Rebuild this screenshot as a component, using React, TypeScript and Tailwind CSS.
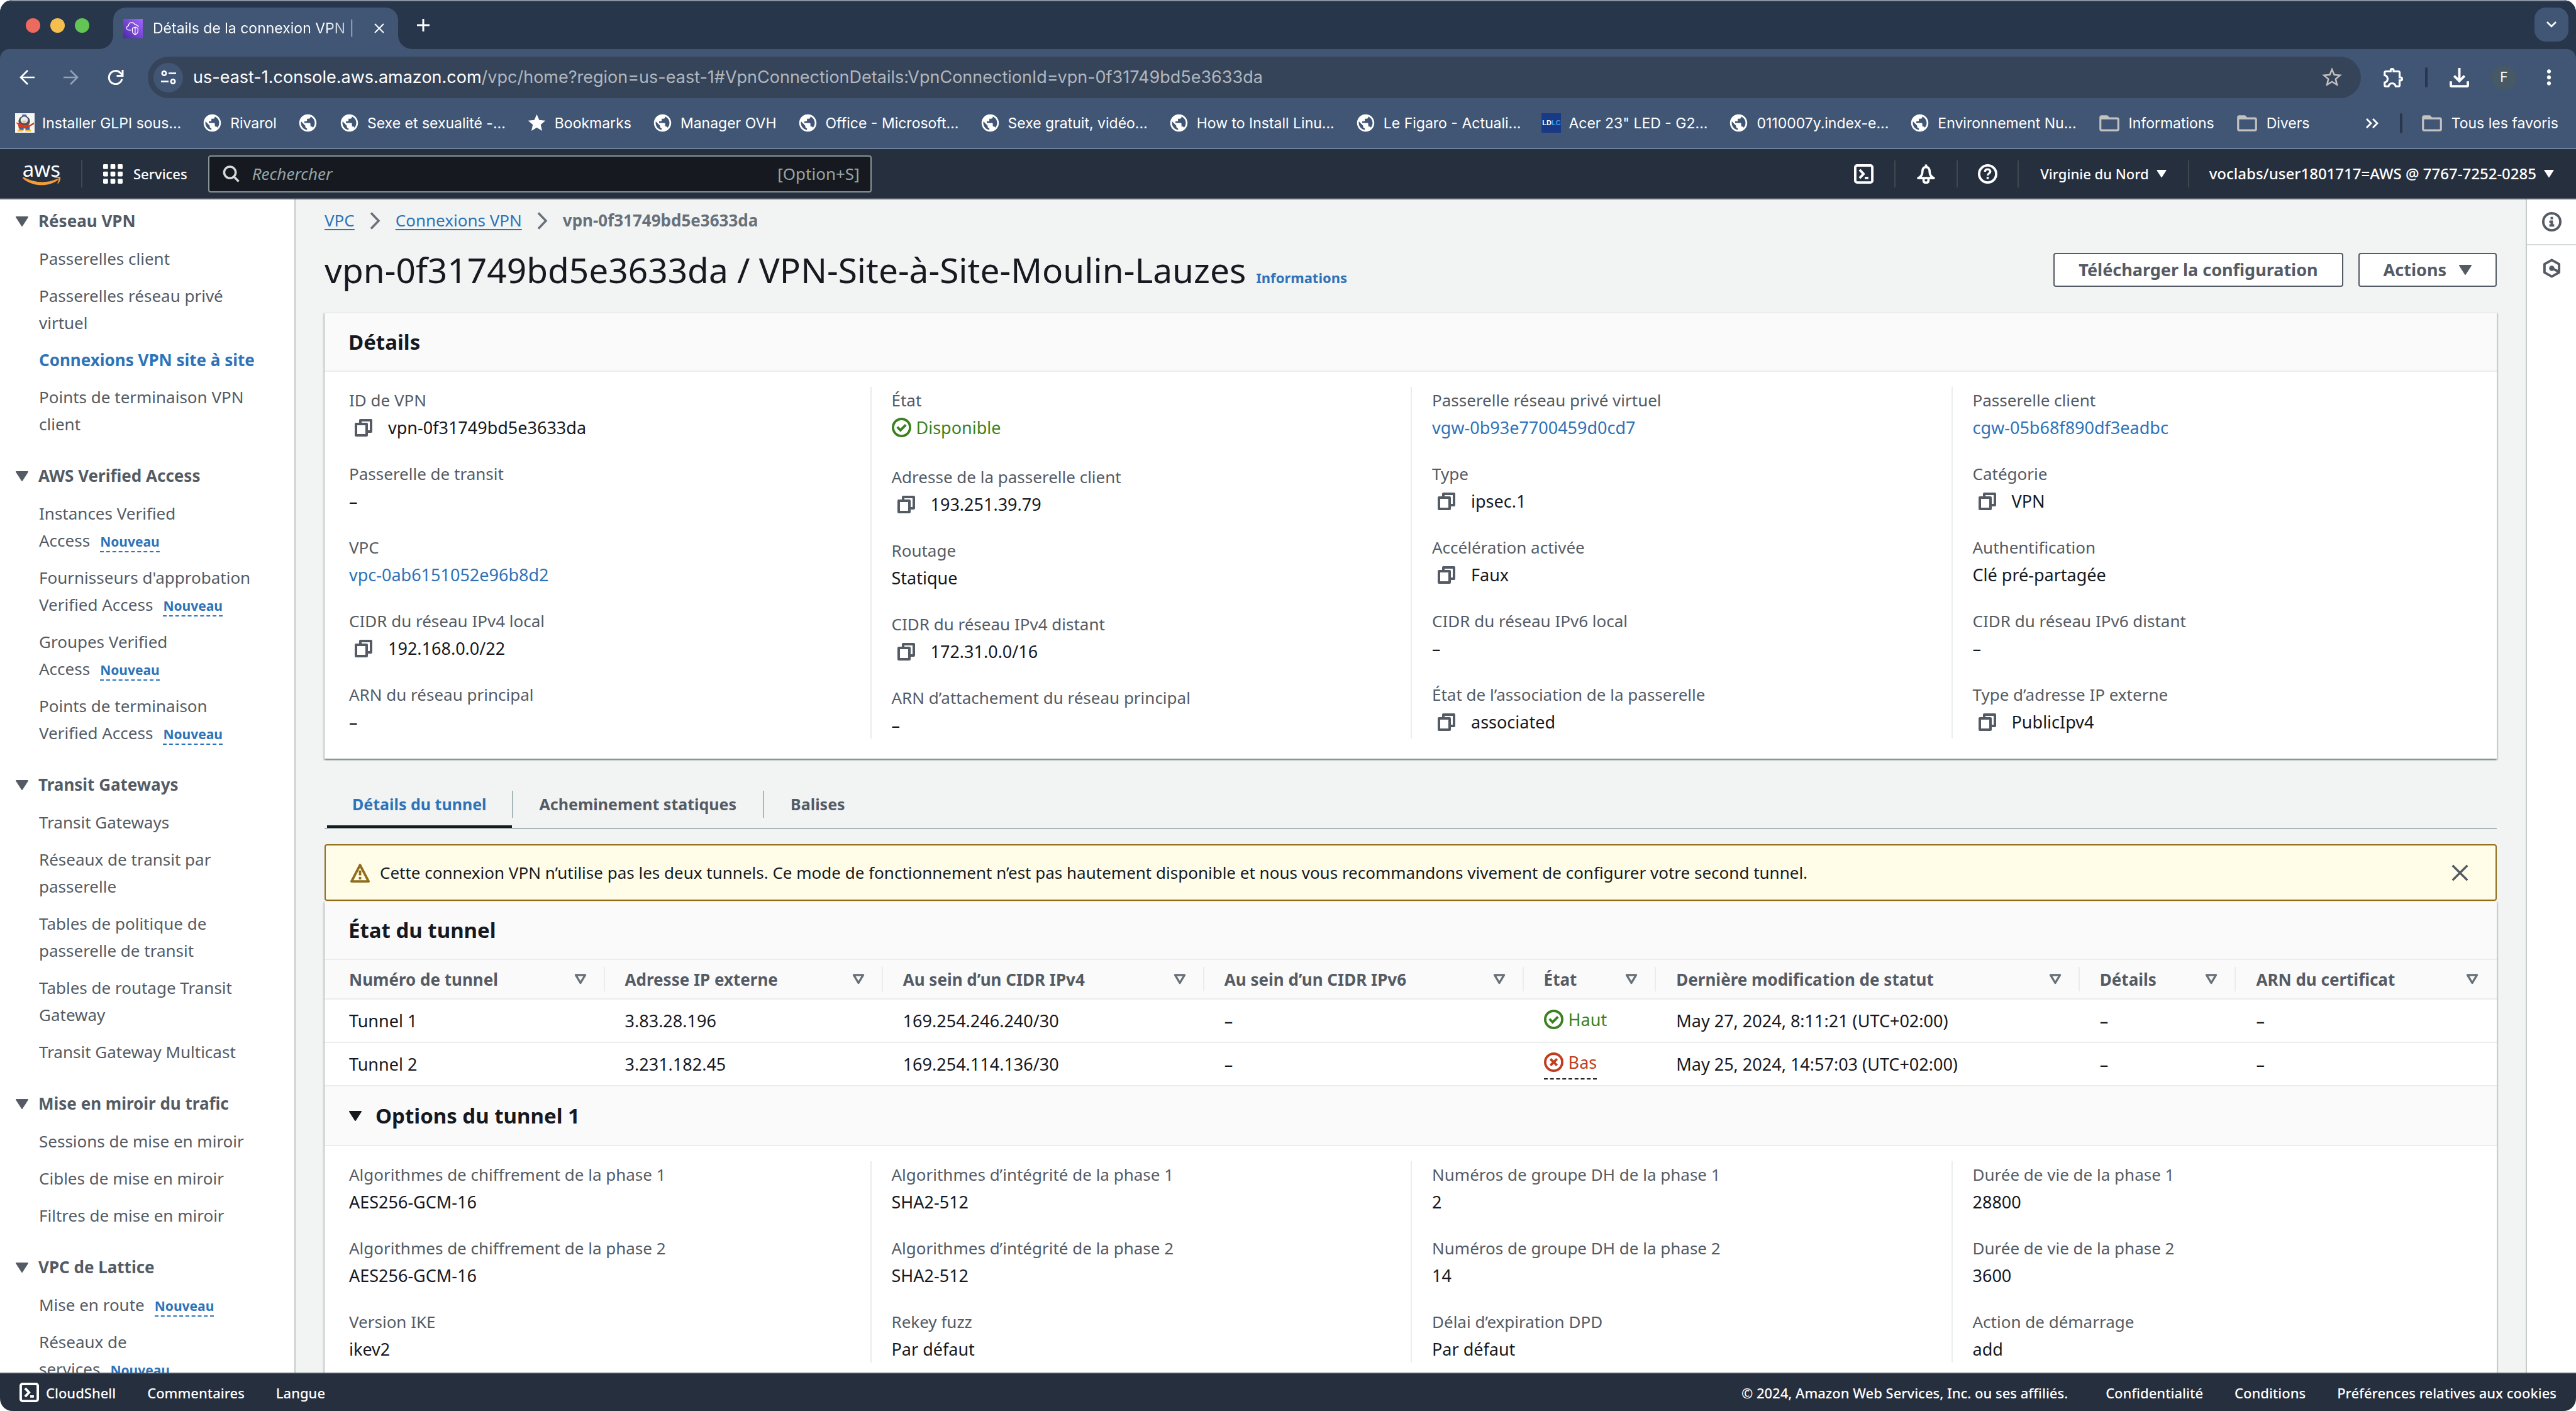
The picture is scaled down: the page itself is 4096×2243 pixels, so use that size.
import type { ReactNode } from "react";
import {
  MdFolderOpen,
  MdMoreVert,
  MdOutlineExtension,
  MdPublic,
  MdStar,
  MdStarBorder,
} from "react-icons/md";

/* ---------- icons ---------- */

function CaretDown({ className }: { className: string }) {
  return (
    <svg viewBox="0 0 20 16" className={className} aria-hidden="true">
      <path d="M1 0h18a1 1 0 0 1 .8 1.5l-9 14a1 1 0 0 1-1.6 0l-9-14A1 1 0 0 1 1 0z" fill="currentColor" />
    </svg>
  );
}

function SortIcon() {
  return (
    <svg viewBox="0 0 20 17" className="h-[17px] w-5 shrink-0" aria-hidden="true">
      <path d="M2.5 2h15L10 14.5z" fill="none" stroke="currentColor" strokeWidth="3.400" strokeLinejoin="round" />
    </svg>
  );
}

function CheckCircle() {
  return (
    <svg viewBox="0 0 16 16" className="size-[31px] shrink-0" fill="none" stroke="currentColor" strokeWidth="2" aria-hidden="true">
      <circle cx="8" cy="8" r="7" />
      <path d="M4.500 7.600l2.600 2.700 4.400-4.400" />
    </svg>
  );
}

function CrossCircle() {
  return (
    <svg viewBox="0 0 16 16" className="size-[31px] shrink-0" fill="none" stroke="currentColor" strokeWidth="2" aria-hidden="true">
      <circle cx="8" cy="8" r="7" />
      <path d="M5.300 5.300l5.400 5.400M10.700 5.300l-5.400 5.400" />
    </svg>
  );
}

function CopyIcon() {
  return (
    <svg viewBox="0 0 14 14" className="size-7" fill="none" stroke="currentColor" strokeWidth="2" strokeLinejoin="round" aria-hidden="true">
      <path d="M1 4h8.500v9H1z" />
      <path d="M4.500 4V1H13v9H9.500" />
    </svg>
  );
}

function WarningIcon() {
  return (
    <svg viewBox="0 0 16 16" className="size-[31px] shrink-0" fill="none" stroke="currentColor" strokeWidth="2" strokeLinejoin="round" aria-hidden="true">
      <path d="M8 1.600L15 15H1z" />
      <path d="M8 6v4M8 11.400v2" />
    </svg>
  );
}

function CloseIcon({ className }: { className: string }) {
  return (
    <svg viewBox="0 0 16 16" className={className} fill="none" stroke="currentColor" strokeWidth="2" aria-hidden="true">
      <path d="M1 1l14 14M15 1L1 15" />
    </svg>
  );
}

function ShellIcon() {
  return (
    <svg viewBox="0 0 16 16" className="size-[31px] shrink-0" fill="none" stroke="currentColor" strokeWidth="2" aria-hidden="true">
      <rect x="1" y="1" width="14" height="14" rx="1.500" />
      <path d="M4.600 4.600L7.800 8l-3.200 3.400M8.800 11.300h3" />
    </svg>
  );
}

function BellIcon() {
  return (
    <svg viewBox="0 0 16 16" className="size-[31px] shrink-0" fill="none" stroke="currentColor" strokeWidth="1.900" strokeLinejoin="round" aria-hidden="true">
      <path d="M8 2.400C5.800 2.400 5 4.200 5 6.400c0 2.600-1.400 4-3.400 5h12.800c-2-1-3.400-2.400-3.400-5 0-2.200-.8-4-3-4zM8 .3v2" />
      <path d="M6 12v1.600c0 1 .8 1.600 2 1.600s2-.6 2-1.600V12" />
    </svg>
  );
}

function HelpIcon() {
  return (
    <svg viewBox="0 0 16 16" className="size-[31px] shrink-0" fill="none" stroke="currentColor" aria-hidden="true">
      <circle cx="8" cy="8" r="7" strokeWidth="2" />
      <path d="M5.800 6.200C5.800 4.900 6.700 4.200 8 4.200s2.200.8 2.200 1.900c0 1.500-2.200 1.500-2.200 3.200" strokeWidth="1.700" />
      <path d="M8 10.400v1.800" strokeWidth="1.800" />
    </svg>
  );
}

function InfoIcon() {
  return (
    <svg viewBox="0 0 16 16" className="size-[31px]" fill="none" stroke="currentColor" strokeWidth="2" aria-hidden="true">
      <circle cx="8" cy="8" r="7" />
      <path d="M8 4v2M6 8h2v3M6 11h4" />
    </svg>
  );
}

function HexagonIcon() {
  return (
    <svg viewBox="0 0 16 16" className="size-[31px]" fill="none" stroke="currentColor" strokeWidth="2" strokeLinejoin="round" aria-hidden="true">
      <path d="M8 1.200l6 3.400v6.800l-6 3.400-6-3.400V4.600z" />
      <circle cx="8" cy="8" r="1.200" fill="currentColor" />
      <path d="M8 8l5.500 2.600" />
    </svg>
  );
}

function SearchIcon() {
  return (
    <svg viewBox="0 0 28 28" className="size-[27px] shrink-0" fill="none" stroke="#d5dbdb" strokeWidth="3.600" aria-hidden="true">
      <circle cx="12" cy="11.500" r="9.500" />
      <path d="M18.500 18.500l8 8" />
    </svg>
  );
}

function BreadcrumbChevron() {
  return (
    <svg viewBox="0 0 17 28" className="h-7 w-[17px]" fill="none" stroke="#687078" strokeWidth="3.500" aria-hidden="true">
      <path d="M2 1.500L14 14 2 26.500" />
    </svg>
  );
}

function AppsGrid() {
  const cells = [0, 1, 2];
  return (
    <svg viewBox="0 0 32 32" className="size-[31px]" fill="currentColor" aria-hidden="true">
      {cells.map((r) => cells.map((c) => <rect key={`${r}${c}`} x={c * 12} y={r * 12} width="8" height="8" rx="1.500" />))}
    </svg>
  );
}

function ArrowIcon({ className }: { className: string }) {
  return (
    <svg viewBox="0 0 24 24" className={className} fill="none" stroke="currentColor" strokeWidth="2.700" aria-hidden="true">
      <path d="M24 12H2M13 1L2 12l11 11" />
    </svg>
  );
}

function ReloadIcon() {
  return (
    <svg viewBox="0 0 26 24" className="h-6 w-[26px]" fill="none" stroke="currentColor" strokeWidth="3" aria-hidden="true">
      <path d="M23 14.500A10.500 10.500 0 1 1 20.500 5l3.500 3.500" />
      <path d="M24 0v9.500h-9.500" />
    </svg>
  );
}

function SiteSettingsIcon() {
  return (
    <svg viewBox="0 0 24 22" className="h-[22px] w-6" fill="none" stroke="#fff" strokeWidth="2.600" aria-hidden="true">
      <circle cx="5" cy="4.500" r="3.200" />
      <path d="M12 4.500h12M0 17.500h12" />
      <circle cx="19" cy="17.500" r="3.200" />
    </svg>
  );
}

function DownloadIcon() {
  return (
    <svg viewBox="0 0 32 32" className="size-[31px]" fill="none" stroke="currentColor" strokeWidth="4" aria-hidden="true">
      <path d="M16 0v20M7.500 13l8.500 8.500L24.500 13" />
      <path d="M2 22v6.500a1.500 1.500 0 0 0 1.500 1.500h25a1.500 1.500 0 0 0 1.500-1.500V22" />
    </svg>
  );
}

function VpcFavicon() {
  return (
    <svg viewBox="0 0 32 32" className="size-[31px] shrink-0" aria-hidden="true">
      <defs>
        <linearGradient id="vpc" x1="0" y1="1" x2="1" y2="0">
          <stop offset="0" stopColor="#4d27a8" />
          <stop offset="1" stopColor="#a166ff" />
        </linearGradient>
      </defs>
      <path d="M0 0h32v32H0z" fill="url(#vpc)" />
      <g fill="none" stroke="#fff" strokeWidth="1.300" strokeLinejoin="round">
        <path d="M13 18.500H9.500C7 18.500 5.500 16.800 5.500 14.800s1.500-3.300 3.200-3.600C8.700 8 11 6 14 6c2.500 0 4.200 1.400 5 3.200 1.500-.6 3.200.2 3.400 1.800 1.600.2 2.800 1 3.200 2" />
        <path d="M19.500 13.500l4.500 1.800v5.200c0 2.500-1.700 4.200-4.500 5.500-2.800-1.300-4.500-3-4.500-5.500v-5.200zM19.500 13.500V26" />
      </g>
    </svg>
  );
}

function PenguinFavicon() {
  return (
    <svg viewBox="0 0 32 32" className="size-[31px] shrink-0" aria-hidden="true">
      <path d="M0 0h32v32H0z" fill="#f7f7f2" />
      <path d="M12 2h6l2 4h-9z" fill="#4b68c8" />
      <ellipse cx="15" cy="13" rx="9.500" ry="8.500" fill="#4a4f5c" />
      <ellipse cx="15" cy="11" rx="6" ry="5.500" fill="#e8ecf4" />
      <path d="M11 12h8l-4 5z" fill="#eec27a" />
      <path d="M1 15l5 1 8 3h10l7-4v3l-7 4v3H6l-1-6z" fill="#d23c1f" />
      <path d="M7 23h7v5H7zM17 23h7v5h-7z" fill="#3d62b5" />
      <path d="M4 27h9v3H4zM17 27h9v3h-9z" fill="#f0bd2e" />
    </svg>
  );
}

function ShopFavicon() {
  return (
    <span className="flex size-[31px] shrink-0 items-center justify-center bg-[#183a86] font-['Liberation_Sans'] text-[11px] leading-none font-bold">
      <span className="text-white">LD</span>
      <span className="text-[#3fa0e8]">LC</span>
    </span>
  );
}

function Globe() {
  return <MdPublic className="size-[33px] shrink-0 text-white" />;
}

function Folder() {
  return <MdFolderOpen className="size-[38px] shrink-0 text-[#c3c2c0]" />;
}

/* ---------- browser chrome ---------- */

function TabStrip() {
  return (
    <div className="flex h-[78px] shrink-0 items-end border-t-2 border-[#8b94a3] bg-[#27364b] pr-3 pl-[41px]">
      <div className="flex h-full items-center gap-4">
        <button aria-label="Fermer la fenêtre" className="size-[23px] rounded-full bg-[#ed6a5e]" />
        <button aria-label="Réduire" className="size-[23px] rounded-full bg-[#f5bf4f]" />
        <button aria-label="Agrandir" className="size-[23px] rounded-full bg-[#62c554]" />
      </div>
      <svg viewBox="0 0 22 22" className="ml-4 size-[22px] shrink-0" aria-hidden="true">
        <path d="M22 0v22H0A22 22 0 0 0 22 0z" fill="#415675" />
      </svg>
      <div className="flex h-[66px] items-center rounded-t-[20px] bg-[#415675] pr-[22px] pl-4">
        <VpcFavicon />
        <span className="ml-4 w-[340px] truncate bg-linear-to-r from-white from-80% to-white/30 bg-clip-text text-[23px] leading-8 text-transparent">
          Détails de la connexion VPN |
        </span>
        <button aria-label="Fermer l’onglet" className="ml-3 text-white">
          <CloseIcon className="size-4" />
        </button>
      </div>
      <svg viewBox="0 0 22 22" className="size-[22px] shrink-0" aria-hidden="true">
        <path d="M0 0v22h22A22 22 0 0 1 0 0z" fill="#415675" />
      </svg>
      <button aria-label="Nouvel onglet" className="ml-2 flex h-full items-center text-white">
        <svg viewBox="0 0 20 20" className="size-5" stroke="currentColor" strokeWidth="3" aria-hidden="true">
          <path d="M10 0v20M0 10h20" />
        </svg>
      </button>
      <button aria-label="Rechercher dans les onglets" className="mb-3 ml-auto flex size-[54px] items-center justify-center rounded-[18px] bg-[#415675] text-white">
        <svg viewBox="0 0 16 10" className="h-[10px] w-4" fill="none" stroke="currentColor" strokeWidth="2.600" aria-hidden="true">
          <path d="M1 1l7 7 7-7" />
        </svg>
      </button>
    </div>
  );
}

function AddressRow() {
  return (
    <div className="flex h-[66px] items-center pr-6 pl-[31px] text-white">
      <button aria-label="Précédent">
        <ArrowIcon className="size-6" />
      </button>
      <button aria-label="Suivant" className="ml-[46px] text-[#96a1b3]">
        <ArrowIcon className="size-6 rotate-180" />
      </button>
      <button aria-label="Actualiser" className="ml-[46px]">
        <ReloadIcon />
      </button>
      <div className="ml-[38px] flex h-[66px] flex-1 items-center rounded-full bg-[#36445a] pr-[27px] pl-[9px]">
        <button aria-label="Informations du site" className="flex size-[47px] items-center justify-center rounded-full bg-[#415675]">
          <SiteSettingsIcon />
        </button>
        <span className="ml-4 text-[27px] leading-10 text-[#b0b7be]">
          <span className="text-white">us-east-1.console.aws.amazon.com</span>
          /vpc/home?region=us-east-1#VpnConnectionDetails:VpnConnectionId=vpn-0f31749bd5e3633da
        </span>
        <button aria-label="Ajouter aux favoris" className="ml-auto text-[#c3c2c0]">
          <MdStarBorder className="size-[38px]" />
        </button>
      </div>
      <button aria-label="Extensions" className="ml-[33px]">
        <MdOutlineExtension className="size-[38px]" />
      </button>
      <span className="ml-[31px] h-8 w-1 rounded-sm bg-[#28374d]" />
      <button aria-label="Téléchargements" className="ml-[35px]">
        <DownloadIcon />
      </button>
      <button aria-label="Profil" className="ml-9 flex size-[39px] items-center justify-center rounded-full bg-[#465964] text-[21px]">
        F
      </button>
      <button aria-label="Menu" className="ml-[33px]">
        <MdMoreVert className="size-[38px]" />
      </button>
    </div>
  );
}

const bookmarks: { icon: ReactNode; label: string }[] = [
  { icon: <PenguinFavicon />, label: "Installer GLPI sous..." },
  { icon: <Globe />, label: "Rivarol" },
  { icon: <Globe />, label: "" },
  { icon: <Globe />, label: "Sexe et sexualité -..." },
  { icon: <MdStar className="size-[33px] shrink-0 text-white" />, label: "Bookmarks" },
  { icon: <Globe />, label: "Manager OVH" },
  { icon: <Globe />, label: "Office - Microsoft..." },
  { icon: <Globe />, label: "Sexe gratuit, vidéo..." },
  { icon: <Globe />, label: "How to Install Linu..." },
  { icon: <Globe />, label: "Le Figaro - Actuali..." },
  { icon: <ShopFavicon />, label: "Acer 23\" LED - G2..." },
  { icon: <Globe />, label: "0110007y.index-e..." },
  { icon: <Globe />, label: "Environnement Nu..." },
  { icon: <Folder />, label: "Informations" },
  { icon: <Folder />, label: "Divers" },
];

function BookmarksBar() {
  return (
    <nav aria-label="Favoris" className="flex h-[81px] items-center border-b-2 border-[#6e829f] pr-[28px] pl-6 text-[23px] leading-8 text-white">
      <div className="flex items-center gap-[33px]">
        {bookmarks.map((b, i) => (
          <a key={i} href="#favori" aria-label={b.label || "Favori"} className="flex items-center gap-3 whitespace-nowrap">
            {b.icon}
            {b.label && <span>{b.label}</span>}
          </a>
        ))}
      </div>
      <button aria-label="Autres favoris" className="ml-auto">
        <svg viewBox="0 0 20 16" className="h-4 w-5" fill="none" stroke="currentColor" strokeWidth="2.800" aria-hidden="true">
          <path d="M1 1l7 7-7 7M11 1l7 7-7 7" />
        </svg>
      </button>
      <span className="ml-[34px] h-8 w-1 rounded-sm bg-[#28374d]" />
      <a href="#favoris" className="ml-7 flex items-center gap-3">
        <Folder />
        Tous les favoris
      </a>
    </nav>
  );
}

/* ---------- AWS header and footer ---------- */

function AwsLogo() {
  return (
    <a href="#accueil" className="flex w-[62px] flex-col items-center text-white">
      <span className="text-[33px] leading-6 font-normal">aws</span>
      <svg viewBox="0 0 62 15" className="h-[15px] w-[61px]" aria-hidden="true">
        <path d="M0 1.500C.500.500 1.500.400 2.600 1c17 9.500 37 9.500 53 2.500 1.500-.6 2.500.6 1.200 1.700C42 16.500 17 16.500 1 3.200.200 2.600-.300 2 0 1.500z" fill="#f29d39" />
        <path d="M51.500 1.800c-1 .1-1-.9-.2-1.200C54-.3 60-.500 61 .600c1 1.200-.8 7.600-3.400 10-.8.700-1.500.3-1.200-.5.900-2.200 2.200-6.300 1.600-7.600-.6-1.200-4.300-.9-6.500-.7z" fill="#f29d39" />
      </svg>
    </a>
  );
}

function AwsHeader() {
  return (
    <header className="flex h-20 shrink-0 items-center border-b-2 border-[#545b64] bg-[#262f3e] pl-[35px] text-[22px] leading-8 font-medium text-white">
      <AwsLogo />
      <span className="ml-8 h-11 w-[2px] bg-[#414750]" />
      <button className="ml-[33px] flex items-center gap-[17px]">
        <AppsGrid />
        Services
      </button>
      <div className="ml-[33px] flex h-[59px] w-[1055px] items-center rounded-[4px] border-2 border-[#879596] bg-[#16191f] pr-[17px] pl-[21px]">
        <SearchIcon />
        <input
          type="search"
          aria-label="Rechercher"
          placeholder="Rechercher"
          className="ml-5 min-w-0 flex-1 bg-transparent text-[26px] leading-8 font-normal italic outline-none placeholder:text-[#95a5a6]"
        />
        <span className="text-[26px] font-normal text-[#95a5a6]">[Option+S]</span>
      </div>
      <div className="ml-auto flex items-center">
        <button aria-label="CloudShell" className="flex h-[43px] w-[99px] items-center justify-center border-r-2 border-[#414750]">
          <ShellIcon />
        </button>
        <button aria-label="Notifications" className="flex h-[43px] w-[99px] items-center justify-center border-r-2 border-[#414750]">
          <BellIcon />
        </button>
        <button aria-label="Aide" className="flex h-[43px] w-[97px] items-center justify-center border-r-2 border-[#414750]">
          <HelpIcon />
        </button>
        <button className="flex h-[43px] items-center gap-3 border-r-2 border-[#414750] px-[34px]">
          Virginie du Nord
          <CaretDown className="h-3 w-4" />
        </button>
        <button className="flex h-[43px] items-center gap-3 pr-[35px] pl-8 text-[24px]">
          voclabs/user1801717=AWS @ 7767-7252-0285
          <CaretDown className="h-3 w-4" />
        </button>
      </div>
    </header>
  );
}

function AwsFooter() {
  return (
    <footer className="flex h-[61px] shrink-0 items-center border-t-2 border-[#414b58] bg-[#262f3e] pr-[31px] pl-[31px] text-[22px] leading-8 font-medium text-white">
      <button className="flex items-center gap-[11px]">
        <ShellIcon />
        CloudShell
      </button>
      <a href="#commentaires" className="ml-[50px]">
        Commentaires
      </a>
      <button className="ml-[50px]">Langue</button>
      <span className="ml-auto">© 2024, Amazon Web Services, Inc. ou ses affiliés.</span>
      <a href="#confidentialite" className="ml-[60px]">
        Confidentialité
      </a>
      <a href="#conditions" className="ml-[50px]">
        Conditions
      </a>
      <button className="ml-[50px]">Préférences relatives aux cookies</button>
    </footer>
  );
}

/* ---------- side navigation ---------- */

type NavItem = { lines: string[]; isNew?: boolean; active?: boolean };

const navSections: { title: string; items: NavItem[] }[] = [
  {
    title: "Réseau VPN",
    items: [
      { lines: ["Passerelles client"] },
      { lines: ["Passerelles réseau privé", "virtuel"] },
      { lines: ["Connexions VPN site à site"], active: true },
      { lines: ["Points de terminaison VPN", "client"] },
    ],
  },
  {
    title: "AWS Verified Access",
    items: [
      { lines: ["Instances Verified", "Access"], isNew: true },
      { lines: ["Fournisseurs d'approbation", "Verified Access"], isNew: true },
      { lines: ["Groupes Verified", "Access"], isNew: true },
      { lines: ["Points de terminaison", "Verified Access"], isNew: true },
    ],
  },
  {
    title: "Transit Gateways",
    items: [
      { lines: ["Transit Gateways"] },
      { lines: ["Réseaux de transit par", "passerelle"] },
      { lines: ["Tables de politique de", "passerelle de transit"] },
      { lines: ["Tables de routage Transit", "Gateway"] },
      { lines: ["Transit Gateway Multicast"] },
    ],
  },
  {
    title: "Mise en miroir du trafic",
    items: [
      { lines: ["Sessions de mise en miroir"] },
      { lines: ["Cibles de mise en miroir"] },
      { lines: ["Filtres de mise en miroir"] },
    ],
  },
  {
    title: "VPC de Lattice",
    items: [
      { lines: ["Mise en route"], isNew: true },
      { lines: ["Réseaux de", "services"], isNew: true },
    ],
  },
];

function SideNav() {
  return (
    <nav className="w-[470px] shrink-0 overflow-hidden border-r-2 border-[#c5caca] bg-white pt-[13px] text-[26px] leading-[43px] text-[#545b64]">
      {navSections.map((s) => (
        <section key={s.title} className="mb-[39px]">
          <button className="flex items-center gap-4 pl-[25px] font-bold">
            <CaretDown className="h-4 w-5" />
            {s.title}
          </button>
          <ul className="mt-[17px] flex flex-col gap-4 pl-[62px]">
            {s.items.map((it) => (
              <li key={it.lines.join(" ")}>
                <a href="#nav" className={it.active ? "font-bold text-[#2e73b8]" : ""}>
                  {it.lines.map((l, i) => (
                    <span key={l}>
                      {i > 0 && <br />}
                      {l}
                    </span>
                  ))}
                </a>
                {it.isNew && (
                  <button className="ml-4 border-b-2 border-dashed border-[#2e73b8] text-[21px] leading-[30px] font-bold text-[#2e73b8]">
                    Nouveau
                  </button>
                )}
              </li>
            ))}
          </ul>
        </section>
      ))}
    </nav>
  );
}

/* ---------- main content ---------- */

type Field = { label: string; value: string; kind?: "copy" | "link" | "ok" };

const details: Field[][] = [
  [
    { label: "ID de VPN", value: "vpn-0f31749bd5e3633da", kind: "copy" },
    { label: "Passerelle de transit", value: "–" },
    { label: "VPC", value: "vpc-0ab6151052e96b8d2", kind: "link" },
    { label: "CIDR du réseau IPv4 local", value: "192.168.0.0/22", kind: "copy" },
    { label: "ARN du réseau principal", value: "–" },
  ],
  [
    { label: "État", value: "Disponible", kind: "ok" },
    { label: "Adresse de la passerelle client", value: "193.251.39.79", kind: "copy" },
    { label: "Routage", value: "Statique" },
    { label: "CIDR du réseau IPv4 distant", value: "172.31.0.0/16", kind: "copy" },
    { label: "ARN d’attachement du réseau principal", value: "–" },
  ],
  [
    { label: "Passerelle réseau privé virtuel", value: "vgw-0b93e7700459d0cd7", kind: "link" },
    { label: "Type", value: "ipsec.1", kind: "copy" },
    { label: "Accélération activée", value: "Faux", kind: "copy" },
    { label: "CIDR du réseau IPv6 local", value: "–" },
    { label: "État de l’association de la passerelle", value: "associated", kind: "copy" },
  ],
  [
    { label: "Passerelle client", value: "cgw-05b68f890df3eadbc", kind: "link" },
    { label: "Catégorie", value: "VPN", kind: "copy" },
    { label: "Authentification", value: "Clé pré-partagée" },
    { label: "CIDR du réseau IPv6 distant", value: "–" },
    { label: "Type d’adresse IP externe", value: "PublicIpv4", kind: "copy" },
  ],
];

const tunnelOptions: Field[][] = [
  [
    { label: "Algorithmes de chiffrement de la phase 1", value: "AES256-GCM-16" },
    { label: "Algorithmes de chiffrement de la phase 2", value: "AES256-GCM-16" },
    { label: "Version IKE", value: "ikev2" },
  ],
  [
    { label: "Algorithmes d’intégrité de la phase 1", value: "SHA2-512" },
    { label: "Algorithmes d’intégrité de la phase 2", value: "SHA2-512" },
    { label: "Rekey fuzz", value: "Par défaut" },
  ],
  [
    { label: "Numéros de groupe DH de la phase 1", value: "2" },
    { label: "Numéros de groupe DH de la phase 2", value: "14" },
    { label: "Délai d’expiration DPD", value: "Par défaut" },
  ],
  [
    { label: "Durée de vie de la phase 1", value: "28800" },
    { label: "Durée de vie de la phase 2", value: "3600" },
    { label: "Action de démarrage", value: "add" },
  ],
];

function FieldValue({ field }: { field: Field }) {
  if (field.kind === "copy") {
    return (
      <dd className="flex items-center text-[27px] text-[#16191f]">
        <button aria-label={`Copier ${field.label}`} className="mr-[25px] ml-[9px] text-[#545b64]">
          <CopyIcon />
        </button>
        {field.value}
      </dd>
    );
  }
  if (field.kind === "link") {
    return (
      <dd className="text-[27px]">
        <a href="#ressource" className="text-[#2e73b8]">
          {field.value}
        </a>
      </dd>
    );
  }
  if (field.kind === "ok") {
    return (
      <dd className="mb-[5px] flex items-center gap-2 text-[27px] text-[#3a821f]">
        <CheckCircle />
        {field.value}
      </dd>
    );
  }
  return <dd className="text-[27px] text-[#16191f]">{field.value}</dd>;
}

function FieldColumns({ columns }: { columns: Field[][] }) {
  return (
    <div className="grid grid-cols-4 px-2 pt-6 pb-8 text-[26px] leading-[43px]">
      {columns.map((col, i) => (
        <dl
          key={i}
          className={`flex flex-col gap-[31px] border-l-2 ${i === 0 ? "border-transparent pl-[29px]" : "border-[#eaeded] pl-8"}`}
        >
          {col.map((f) => (
            <div key={f.label}>
              <dt className="text-[#545b64]">{f.label}</dt>
              <FieldValue field={f} />
            </div>
          ))}
        </dl>
      ))}
    </div>
  );
}

const cardClass =
  "border-t-2 border-[#eaeded] bg-white shadow-[0_2px_2px_0_rgba(0,28,36,0.4),2px_2px_2px_0_rgba(0,28,36,0.15),-2px_2px_2px_0_rgba(0,28,36,0.15)]";

const tableColumns: { label: string; width: string }[] = [
  { label: "Numéro de tunnel", width: "w-[12.9%]" },
  { label: "Adresse IP externe", width: "w-[12.8%]" },
  { label: "Au sein d’un CIDR IPv4", width: "w-[14.8%]" },
  { label: "Au sein d’un CIDR IPv6", width: "w-[14.7%]" },
  { label: "État", width: "w-[6.1%]" },
  { label: "Dernière modification de statut", width: "w-[19.5%]" },
  { label: "Détails", width: "w-[7.2%]" },
  { label: "ARN du certificat", width: "w-[12%]" },
];

const tunnels = [
  { name: "Tunnel 1", ip: "3.83.28.196", cidr: "169.254.246.240/30", up: true, date: "May 27, 2024, 8:11:21 (UTC+02:00)" },
  { name: "Tunnel 2", ip: "3.231.182.45", cidr: "169.254.114.136/30", up: false, date: "May 25, 2024, 14:57:03 (UTC+02:00)" },
];

function TunnelTable() {
  return (
    <table className="w-full table-fixed border-collapse text-left leading-[34px] text-[#16191f]">
      <thead className="bg-[#fafafa] text-[26px] text-[#545b64]">
        <tr className="h-[62px] border-b-2 border-[#eaeded]">
          {tableColumns.map((c, i) => (
            <th key={c.label} scope="col" className={`p-0 font-bold ${c.width}`}>
              <div
                className={`flex h-[39px] items-center justify-between ${i === 0 ? "pl-[39px]" : "pl-8"} ${
                  i === tableColumns.length - 1 ? "pr-[29px]" : "border-r-2 border-[#eaeded] pr-[27px]"
                }`}
              >
                <span className="whitespace-nowrap">{c.label}</span>
                <button aria-label={`Trier par ${c.label}`} className="text-[#687078]">
                  <SortIcon />
                </button>
              </div>
            </th>
          ))}
        </tr>
      </thead>
      <tbody className="text-[27px]">
        {tunnels.map((t) => (
          <tr key={t.name} className="h-[69px] border-b-2 border-[#eaeded]">
            <td className="p-0 pl-[39px]">{t.name}</td>
            <td className="p-0 pl-8">{t.ip}</td>
            <td className="p-0 pl-8">{t.cidr}</td>
            <td className="p-0 pl-8">–</td>
            <td className="p-0 pl-8">
              {t.up ? (
                <span className="flex items-center gap-2 pb-1 text-[#3a821f]">
                  <CheckCircle />
                  Haut
                </span>
              ) : (
                <button className="flex items-center gap-2 border-b-2 border-dashed border-[#16191f] pt-1 pb-2 text-[#c03e20]">
                  <CrossCircle />
                  Bas
                </button>
              )}
            </td>
            <td className="p-0 pl-8">{t.date}</td>
            <td className="p-0 pl-8">–</td>
            <td className="p-0 pl-8">–</td>
          </tr>
        ))}
      </tbody>
    </table>
  );
}

function Tabs() {
  const tab = "flex h-[76px] items-center font-bold";
  return (
    <div role="tablist" className="mt-[34px] flex border-b-2 border-[#aab7b8] pl-1 text-[25px] leading-[34px] text-[#545b64]">
      <button role="tab" aria-selected="true" className={`${tab} border-b-4 border-[#16191f] px-10 pt-1 text-[#2e73b8]`}>
        Détails du tunnel
      </button>
      <span className="h-[43px] w-[2px] self-center bg-[#aab7b8]" />
      <button role="tab" aria-selected="false" className={`${tab} px-[42px]`}>
        Acheminement statiques
      </button>
      <span className="h-[43px] w-[2px] self-center bg-[#aab7b8]" />
      <button role="tab" aria-selected="false" className={`${tab} px-[42px]`}>
        Balises
      </button>
    </div>
  );
}

function MainContent() {
  const action = "flex h-[54px] items-center rounded-[4px] border-2 border-[#545b64] bg-white px-[38px] text-[27px] leading-[34px] font-bold text-[#545b64]";
  return (
    <main className="flex min-w-0 flex-1 flex-col overflow-hidden bg-[#f2f4f4] px-[46px] pt-3 text-[#16191f]">
      <nav aria-label="Fil d’Ariane">
        <ol className="flex items-center gap-6 text-[26px] leading-[43px]">
          <li>
            <a href="#vpc" className="text-[#2e73b8] underline underline-offset-4">
              VPC
            </a>
          </li>
          <BreadcrumbChevron />
          <li>
            <a href="#connexions" className="text-[#2e73b8] underline underline-offset-4">
              Connexions VPN
            </a>
          </li>
          <BreadcrumbChevron />
          <li className="font-bold text-[#687078]">vpn-0f31749bd5e3633da</li>
        </ol>
      </nav>

      <div className="mt-[22px] mb-[32px] flex items-center">
        <h1 className="text-[55px] leading-[70px]">vpn-0f31749bd5e3633da / VPN-Site-à-Site-Moulin-Lauzes</h1>
        <a href="#informations" className="mt-6 ml-4 text-[22px] leading-7 font-bold text-[#2e73b8]">
          Informations
        </a>
        <div className="ml-auto flex gap-6">
          <button className={action}>Télécharger la configuration</button>
          <button className={`${action} gap-5`}>
            Actions
            <CaretDown className="h-4 w-5" />
          </button>
        </div>
      </div>

      <section className={cardClass}>
        <h2 className="flex h-[93px] items-center border-b-2 border-[#eaeded] bg-[#fafafa] px-[38px] text-[33px] leading-[42px] font-bold">
          Détails
        </h2>
        <FieldColumns columns={details} />
      </section>

      <Tabs />

      <div role="alert" className="mt-6 flex h-[90px] shrink-0 items-center rounded-[4px] border-2 border-[#906d1c] bg-[#fffde8] pr-[43px] pl-[39px] text-[26px] leading-[34px]">
        <span className="text-[#906d1c]">
          <WarningIcon />
        </span>
        <p className="ml-4">
          Cette connexion VPN n’utilise pas les deux tunnels. Ce mode de fonctionnement n’est pas hautement disponible et nous vous recommandons vivement de configurer votre second tunnel.
        </p>
        <button aria-label="Fermer" className="ml-auto text-[#545b64]">
          <CloseIcon className="size-[27px]" />
        </button>
      </div>

      <section className={cardClass}>
        <h2 className="flex h-[92px] items-center border-b-2 border-[#eaeded] bg-[#fafafa] px-[38px] text-[33px] leading-[42px] font-bold">
          État du tunnel
        </h2>
        <TunnelTable />
        <h2 className="border-b-2 border-[#eaeded] bg-[#fafafa] text-[33px] leading-[42px] font-bold">
          <button className="flex h-[93px] items-center gap-[22px] pl-[39px]">
            <CaretDown className="h-4 w-5" />
            Options du tunnel 1
          </button>
        </h2>
        <FieldColumns columns={tunnelOptions} />
      </section>
    </main>
  );
}

function ToolRail() {
  return (
    <aside className="w-20 shrink-0 border-l-2 border-[#c5caca] bg-white text-[#545b64]">
      <button aria-label="Informations" className="flex h-[73px] w-full items-center justify-center border-b-2 border-[#d5dbdb]">
        <InfoIcon />
      </button>
      <button aria-label="Diagnostic" className="flex h-[72px] w-full items-center justify-center">
        <HexagonIcon />
      </button>
    </aside>
  );
}

export default function App() {
  return (
    <div className="bg-white font-['Noto_Sans',sans-serif]">
      <div className="flex h-screen flex-col overflow-hidden rounded-[20px]">
        <div className="shrink-0 bg-[#27364b] font-['Inter',sans-serif]">
          <TabStrip />
          <div className="rounded-t-[15px] bg-[#415675] pt-3">
            <AddressRow />
            <BookmarksBar />
          </div>
        </div>
        <AwsHeader />
        <div className="flex min-h-0 flex-1">
          <SideNav />
          <MainContent />
          <ToolRail />
        </div>
        <AwsFooter />
      </div>
    </div>
  );
}
